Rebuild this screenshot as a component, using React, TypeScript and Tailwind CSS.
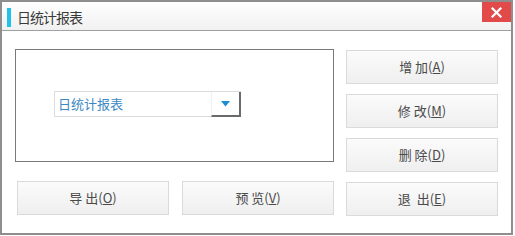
const FONT = "font-['Microsoft_YaHei','Noto_Sans_CJK_SC',sans-serif]";

function Btn({ label, hot }: { label: string; hot: string }) {
  return (
    <button
      className={`h-[34px] w-[152px] border border-[#dadada] bg-gradient-to-b from-[#fbfbfb] to-[#efefef] text-[13px] text-[#4a4a4a] whitespace-pre ${FONT}`}
    >
      {label}(<span className="underline">{hot}</span>)
    </button>
  );
}

export default function App() {
  return (
    <div className={`w-[513px] h-[235px] border-2 border-[#8e8e8e] bg-white flex flex-col ${FONT}`}>
      {/* Title bar */}
      <div className="h-[29px] shrink-0 flex items-start border-b border-[#a0a0a0] bg-gradient-to-b from-white to-[#f1f1f1]">
        <div className="mt-[6px] ml-[5px] w-[4px] h-[19px] bg-[#1fc3ea]" />
        <span className="mt-[6px] ml-[6px] text-[14px] leading-[18px] tracking-[-1px] text-[#3a3a3a]">日统计报表</span>
        <button className="ml-auto w-[29px] h-[20px] bg-[#e24a4a] flex items-center justify-center">
          <svg width="11" height="11" viewBox="0 0 11 11">
            <path d="M1.5 1.5 L9.5 9.5 M9.5 1.5 L1.5 9.5" stroke="white" strokeWidth="2.2" strokeLinecap="square" />
          </svg>
        </button>
      </div>

      {/* Body */}
      <div className="flex pl-[13px]">
        <div className="flex flex-col w-[319px]">
          <div className="mt-[18px] h-[113px] border border-[#7a7a7a] pt-[41px] pl-[38px]">
            <div className="flex w-[187px] h-[26px] border border-[#dcdcdc] bg-white">
              <div className="flex-1 pl-[3px] text-[13px] leading-[24px] text-[#3b88c4]">日统计报表</div>
              <div className="w-[30px] h-[25px] -mr-px border-r-2 border-b-2 border-[#6a6a6a] border-l border-l-[#f0f0f0] flex items-center justify-center">
                <svg width="9" height="6" viewBox="0 0 9 6">
                  <path d="M0 0 H9 L4.5 5.5 Z" fill="#1a8fd2" />
                </svg>
              </div>
            </div>
          </div>
          <div className="mt-[19px] ml-[2px] flex gap-[13px]">
            <Btn label="导 出" hot="O" />
            <Btn label="预 览" hot="V" />
          </div>
        </div>
        <div className="ml-[12px] mt-[19px] flex flex-col gap-[10px]">
          <Btn label="增 加" hot="A" />
          <Btn label="修 改" hot="M" />
          <Btn label="删 除" hot="D" />
          <Btn label="退  出" hot="E" />
        </div>
      </div>
    </div>
  );
}
